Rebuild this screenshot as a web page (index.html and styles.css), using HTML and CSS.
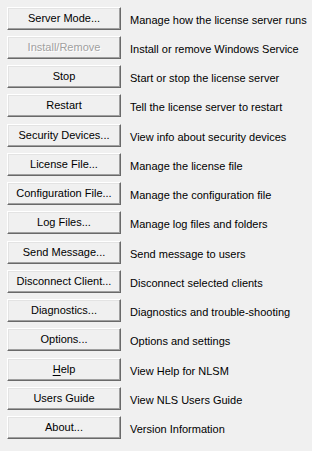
FILE: index.html
```html
<!DOCTYPE html>
<html lang="en">
<head>
  <meta charset="UTF-8">
  <title>License Server Manager</title>
  <link rel="stylesheet" href="styles.css">
</head>
<body>
  <div class="panel">
    <div class="row"><button class="btn">Server Mode...</button><span class="desc">Manage how the license server runs</span></div>
    <div class="row"><button class="btn" disabled>Install/Remove</button><span class="desc">Install or remove Windows Service</span></div>
    <div class="row"><button class="btn">Stop</button><span class="desc">Start or stop the license server</span></div>
    <div class="row"><button class="btn">Restart</button><span class="desc">Tell the license server to restart</span></div>
    <div class="row row--wide"><button class="btn">Security Devices...</button><span class="desc">View info about security devices</span></div>
    <div class="row"><button class="btn">License File...</button><span class="desc">Manage the license file</span></div>
    <div class="row"><button class="btn">Configuration File...</button><span class="desc">Manage the configuration file</span></div>
    <div class="row"><button class="btn">Log Files...</button><span class="desc">Manage log files and folders</span></div>
    <div class="row row--wide"><button class="btn">Send Message...</button><span class="desc">Send message to users</span></div>
    <div class="row"><button class="btn">Disconnect Client...</button><span class="desc">Disconnect selected clients</span></div>
    <div class="row"><button class="btn">Diagnostics...</button><span class="desc">Diagnostics and trouble-shooting</span></div>
    <div class="row"><button class="btn">Options...</button><span class="desc">Options and settings</span></div>
    <div class="row row--wide"><button class="btn"><u>H</u>elp</button><span class="desc">View Help for NLSM</span></div>
    <div class="row"><button class="btn">Users Guide</button><span class="desc">View NLS Users Guide</span></div>
    <div class="row"><button class="btn">About...</button><span class="desc">Version Information</span></div>
  </div>
</body>
</html>
```

FILE: styles.css
```css
:root {
  --face: #f0f0f0;
  --light: #ffffff;
  --light-inner: #e3e3e3;
  --shadow: #a0a0a0;
  --dark: #696969;
  --text: #000;
  --disabled: #a0a0a0;
}

body {
  margin: 0;
  background: var(--face);
  font-family: "Liberation Sans", Arial, sans-serif;
  font-size: 11px;
  color: var(--text);
}

.panel {
  display: flex;
  flex-direction: column;
  gap: 6px;
  padding: 7px 0 0 7px;
}

.row {
  display: flex;
  align-items: center;
}

.row--wide {
  margin-top: 1px;
}

.btn {
  flex-shrink: 0;
  width: 114px;
  height: 23px;
  margin: 0;
  padding: 0 0 1px;
  background: var(--face);
  border: 1px solid;
  border-color: var(--light) var(--dark) var(--dark) var(--light);
  box-shadow: inset -1px -1px 0 var(--shadow), inset 1px 1px 0 var(--light-inner);
  border-radius: 0;
  font: inherit;
  color: var(--text);
  text-align: center;
  white-space: nowrap;
}

.btn u {
  text-decoration: underline;
  text-underline-offset: 2px;
}

.btn:disabled {
  color: var(--disabled);
  text-shadow: 1px 1px 0 var(--light);
}

.desc {
  margin: 2px 0 0 9px;
  white-space: nowrap;
}
```
